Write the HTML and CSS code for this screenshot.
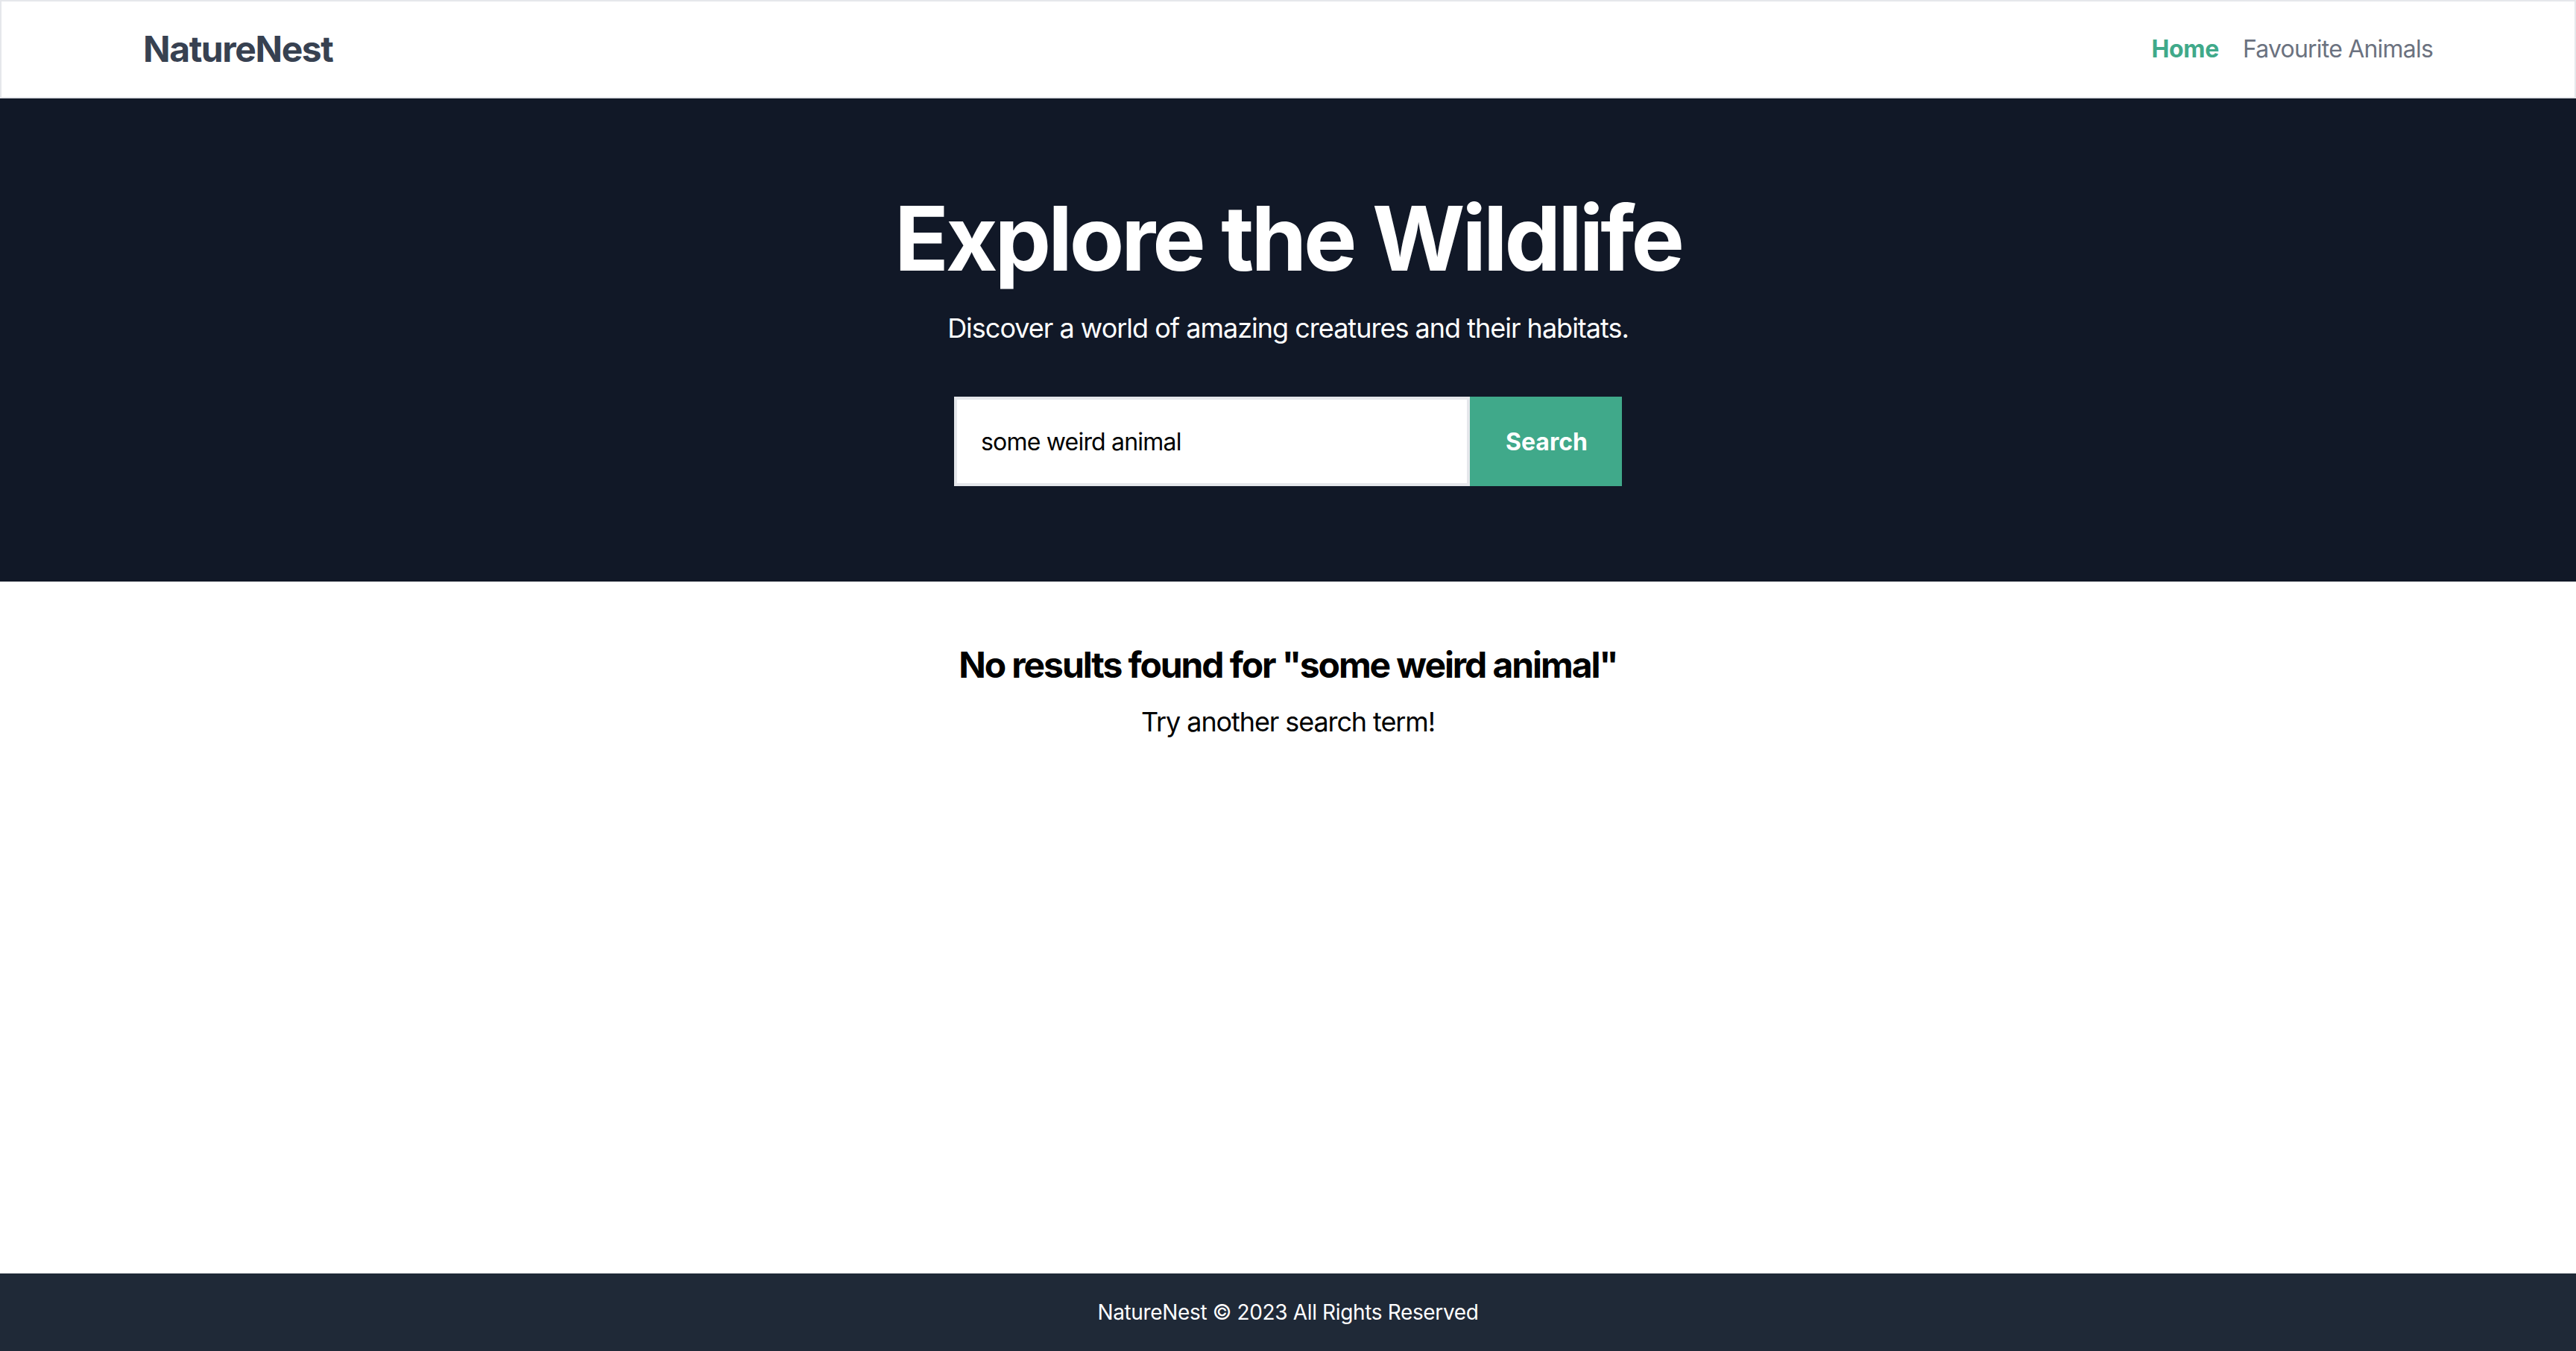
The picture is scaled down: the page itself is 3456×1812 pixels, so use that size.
FILE: index.html
```html
<!DOCTYPE html>
<html lang="en">
<head>
<meta charset="utf-8">
<title>NatureNest</title>
<link rel="stylesheet" href="styles.css">
</head>
<body>
<div class="page">
  <header class="site-header">
    <div class="container header-inner">
      <a class="brand" href="#">NatureNest</a>
      <nav class="nav">
        <a class="nav-link active" href="#">Home</a>
        <a class="nav-link" href="#">Favourite Animals</a>
      </nav>
    </div>
  </header>
  <section class="hero">
    <h1 class="hero-title">Explore the Wildlife</h1>
    <p class="hero-sub">Discover a world of amazing creatures and their habitats.</p>
    <form class="search" onsubmit="return false">
      <input class="search-input" type="text" value="some weird animal">
      <button class="search-btn" type="submit">Search</button>
    </form>
  </section>
  <main class="results">
    <h2 class="results-title">No results found for "some weird animal"</h2>
    <p class="results-sub">Try another search term!</p>
  </main>
  <footer class="site-footer">
    <p class="footer-text">NatureNest © 2023 All Rights Reserved</p>
  </footer>
</div>
</body>
</html>
```
FILE: styles.css
```css
* { box-sizing: border-box; }
html, body { margin: 0; padding: 0; }
body {
  font-family: Inter, "Noto Sans", "Liberation Sans", sans-serif;
  color: #000;
  background: #fff;
}
.page {
  min-height: 100vh;
  display: flex;
  flex-direction: column;
}
.site-header {
  background: #fff;
  border: 2px solid #e5e7eb;
  padding: 32px 0;
}
.container {
  max-width: 3072px;
  margin: 0 auto;
  width: 3072px;
}
.header-inner {
  display: flex;
  justify-content: space-between;
  align-items: center;
  height: 64px;
}
.brand {
  font-size: 48px;
  font-weight: 700;
  color: #374151;
  text-decoration: none;
  line-height: 64px;
  letter-spacing: -1.4px;
}
.nav {
  display: flex;
  gap: 32px;
  align-items: center;
}
.nav-link {
  font-size: 32px;
  line-height: 48px;
  color: #6b7280;
  text-decoration: none;
  letter-spacing: -0.8px;
}
.nav-link.active {
  color: #40a98a;
  font-weight: 700;
  letter-spacing: -0.3px;
}
.hero {
  background: #111827;
  color: #fff;
  text-align: center;
  padding: 128px 0;
  display: flex;
  flex-direction: column;
  align-items: center;
}
.hero-title {
  margin: 0 0 32px;
  font-size: 120px;
  line-height: 120px;
  font-weight: 700;
  letter-spacing: -4px;
}
.hero-sub {
  margin: 0 0 64px;
  font-size: 36px;
  line-height: 56px;
  letter-spacing: -1px;
}
.search {
  display: flex;
  margin: 0;
}
.search-input {
  width: 692px;
  height: 120px;
  border: 4px solid #e5e7eb;
  padding: 0 32px;
  font-family: inherit;
  font-size: 32px;
  letter-spacing: -0.8px;
  color: #000;
  background: #fff;
  outline: none;
  margin: 0;
}
.search-btn {
  height: 120px;
  width: 204px;
  border: none;
  background: #40a98a;
  color: #fff;
  font-family: inherit;
  font-size: 32px;
  font-weight: 700;
  padding: 0 48px;
  margin: 0;
}
.results {
  flex: 1;
  text-align: center;
  padding: 80px 0;
}
.results-title {
  margin: 0;
  font-size: 48px;
  line-height: 64px;
  font-weight: 700;
  letter-spacing: -2.1px;
}
.results-sub {
  margin: 16px 0 0;
  font-size: 36px;
  line-height: 56px;
  letter-spacing: -1.1px;
}
.site-footer {
  background: #1f2937;
  color: #fff;
  text-align: center;
  padding: 32px 0;
}
.footer-text {
  margin: 0;
  font-size: 28px;
  line-height: 40px;
  letter-spacing: -0.35px;
}
```
